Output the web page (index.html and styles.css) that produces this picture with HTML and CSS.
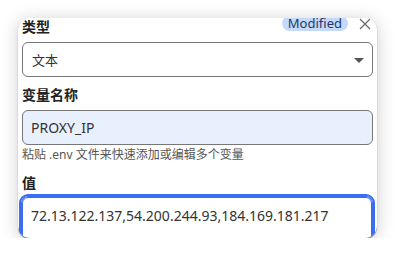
FILE: index.html
```html
<!DOCTYPE html>
<html lang="zh">
<head>
<meta charset="utf-8">
<link rel="stylesheet" href="styles.css">
</head>
<body>
<div class="card">
  <div class="content">
    <div class="head-row">
      <div class="label first">类型</div>
      <div class="head-actions">
        <span class="badge">Modified</span>
        <svg class="close" width="12" height="12" viewBox="0 0 12 12"><path d="M1 1L11 11M11 1L1 11" stroke="#6b6b6b" stroke-width="1.3" fill="none"/></svg>
      </div>
    </div>
    <div class="select">
      <span>文本</span>
      <svg class="caret" width="10" height="5" viewBox="0 0 10 5"><path d="M0 0H10L5 5Z" fill="#555"/></svg>
    </div>
    <div class="label">变量名称</div>
    <div class="input filled">PROXY_IP</div>
    <div class="hint">粘贴 .env 文件来快速添加或编辑多个变量</div>
    <div class="label value-label">值</div>
    <div class="input focused">72.13.122.137,54.200.244.93,184.169.181.217</div>
  </div>
</div>
</body>
</html>
```

FILE: styles.css
```css
html, body {
  margin: 0;
  padding: 0;
  background: #ffffff;
}
body {
  font-family: "Noto Sans", "Noto Sans CJK SC", sans-serif;
  color: #222;
}
.card {
  margin: 18px 0 0 18px;
  width: 359px;
  height: 220px;
  background: #fff;
  border-radius: 12px;
  overflow: hidden;
  box-shadow: 0 1px 1px rgba(0,0,0,0.55), 0 2px 18px rgba(0,0,0,0.2);
}
.content {
  margin-top: -4px;
  padding: 0 4px;
  display: flex;
  flex-direction: column;
}
.head-row {
  display: flex;
  justify-content: space-between;
  align-items: flex-start;
}
.head-actions {
  display: flex;
  align-items: center;
  gap: 11px;
  padding-right: 2px;
  margin-top: 2px;
}
.badge {
  height: 15px;
  line-height: 14px;
  padding: 0 6px;
  border-radius: 8px;
  background: #c4d9fc;
  color: #1e3766;
  font-size: 13px;
}
.close {
  display: block;
}
.label {
  font-size: 14px;
  font-weight: 700;
  line-height: 20px;
  margin-top: 8px;
  color: #222;
}
.label.first {
  margin-top: 3px;
}
.select {
  margin-top: 5px;
  height: 35px;
  box-sizing: border-box;
  border: 1px solid #777;
  border-radius: 6px;
  display: flex;
  align-items: center;
  justify-content: space-between;
  padding: 0 8px 0 9px;
  font-size: 13px;
  color: #333;
}
.caret {
  display: block;
  margin-top: 1px;
}
.input {
  margin-top: 5px;
  height: 35px;
  box-sizing: border-box;
  border: 1px solid #777;
  border-radius: 6px;
  display: flex;
  align-items: center;
  padding: 0 8px;
  font-size: 14px;
  color: #333;
}
.input.filled {
  background: #e8f0fe;
}
.hint {
  margin-top: 2px;
  font-size: 12px;
  line-height: 16px;
  color: #555;
}
.value-label {
  margin-top: 10px;
}
.input.focused {
  margin-top: 4px;
  height: 50px;
  align-items: flex-start;
  padding-top: 8px;
  border-color: #3c6df0;
  box-shadow: 0 0 0 1px #3c6df0;
  outline: 2px solid #3c6df0;
  outline-offset: 1px;
  margin-right: 1px;
}
```
